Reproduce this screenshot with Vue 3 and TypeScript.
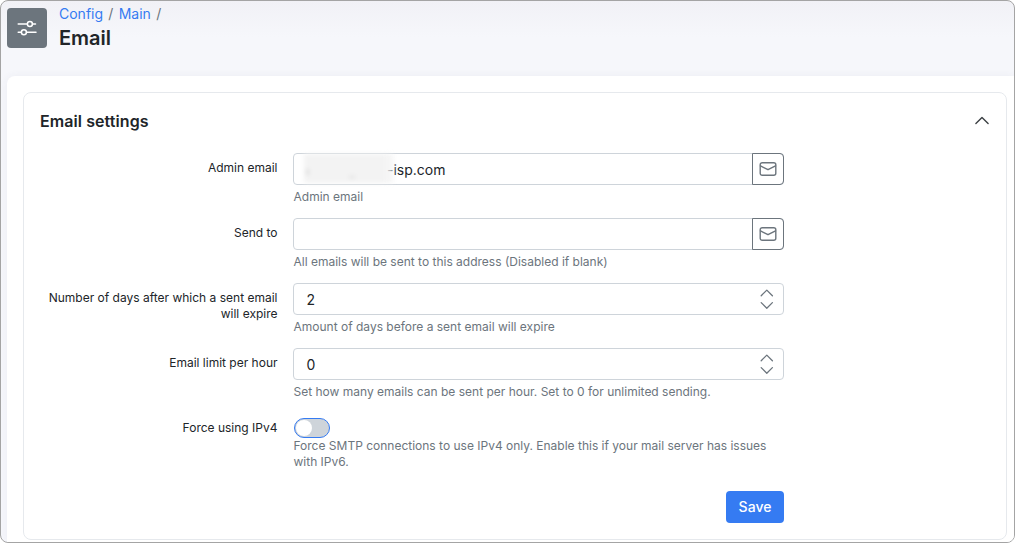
<script setup lang="ts">
interface Field {
  label: string
  hint: string
  kind: 'email' | 'number' | 'toggle'
  value: string
  masked?: boolean
}

const fields: Field[] = [
  { label: 'Admin email', hint: 'Admin email', kind: 'email', value: '-isp.com', masked: true },
  { label: 'Send to', hint: 'All emails will be sent to this address (Disabled if blank)', kind: 'email', value: '' },
  { label: 'Number of days after which a sent email will expire', hint: 'Amount of days before a sent email will expire', kind: 'number', value: '2' },
  { label: 'Email limit per hour', hint: 'Set how many emails can be sent per hour. Set to 0 for unlimited sending.', kind: 'number', value: '0' },
  { label: 'Force using IPv4', hint: 'Force SMTP connections to use IPv4 only. Enable this if your mail server has issues with IPv6.', kind: 'toggle', value: '' },
]
</script>

<template>
  <div class="window">
    <header class="header">
      <div class="header-icon">
        <svg width="20" height="16" viewBox="0 0 20 16" fill="none" stroke="#fff" stroke-width="1.5" stroke-linecap="round">
          <path d="M1.200 4h9M15.500 4h3M1.200 12.300h3M9.500 12.300h9.500" />
          <circle cx="12.900" cy="4" r="2.500" />
          <circle cx="6.900" cy="12.300" r="2.500" />
        </svg>
      </div>
      <div class="titles">
        <nav class="crumbs"><a>Config</a><span>/</span><a>Main</a><span>/</span></nav>
        <h1>Email</h1>
      </div>
    </header>
    <main class="panel">
      <section class="card">
        <div class="card-head">
          <h2>Email settings</h2>
          <svg width="16" height="10" viewBox="0 0 16 10" fill="none" stroke="#3c4044" stroke-width="1.4" stroke-linecap="round" stroke-linejoin="round">
            <path d="M1.900 7.500 8 1.400l6.100 6.100" />
          </svg>
        </div>
        <div class="fields">
          <div v-for="f in fields" :key="f.label" class="row" :class="f.kind">
            <div class="label">{{ f.label }}</div>
            <div class="control">
              <button v-if="f.kind === 'toggle'" class="switch" aria-label="Force using IPv4"><i></i></button>
              <div v-else class="input" :class="{ masked: f.masked }">
                <span class="value">{{ f.value }}</span>
                <span v-if="f.masked" class="mask"><i class="trace"></i><i class="tail"></i></span>
                <span v-if="f.kind === 'email'" class="addon">
                  <svg width="18" height="16" viewBox="0 0 18 16" fill="none" stroke="#6c757d" stroke-width="1.4" stroke-linejoin="round" stroke-linecap="round">
                    <rect x="1.200" y="1.700" width="15.600" height="12.600" rx="2" />
                    <path d="M1.500 4.900 9 8.700l7.500-3.800" />
                  </svg>
                </span>
                <svg v-else class="stepper" width="14" height="22" viewBox="0 0 14 22" fill="none" stroke="#6c757d" stroke-width="1.300" stroke-linecap="round" stroke-linejoin="round">
                  <path d="M1.200 7.700 6.800 2.100l5.600 5.600M1.200 14.600 6.800 20.200l5.600-5.600" />
                </svg>
              </div>
              <div class="hint">{{ f.hint }}</div>
            </div>
          </div>
        </div>
        <div class="actions"><button class="save">Save</button></div>
      </section>
    </main>
  </div>
</template>

<style>
body { background: #fff; }
</style>

<style scoped>
* { box-sizing: border-box; }
.window {
  width: 1015px;
  height: 543px;
  border: 1px solid #a4a4a4;
  border-radius: 8px;
  overflow: hidden;
  display: flex;
  flex-direction: column;
  background: linear-gradient(#f1f1f6 0, #f6f7fb 36px, #f6f7fc 100%);
  font-family: Inter, "Liberation Sans", sans-serif;
  color: #212529;
}
.header { height: 75px; flex: none; display: flex; padding: 7px 0 0 6px; }
.header-icon {
  width: 40px; height: 40px; border-radius: 4px; background: #6c757d;
  display: flex; align-items: center; justify-content: center;
}
.titles { margin-left: 12px; margin-top: -3px; }
.crumbs { font-size: 14px; line-height: 18px; color: #6c757d; white-space: nowrap; }
.crumbs a { color: #357bf2; }
.crumbs span { margin: 0 5.3px; }
h1 { margin: 2px 0 0; font-size: 20px; line-height: 26px; font-weight: 600; }
.panel {
  flex: 1; margin-left: 6px; padding: 16px 7px 2px 16px;
  background: #fff; border-top-left-radius: 8px;
  box-shadow: 0 0 8px rgba(60, 60, 110, .06);
}
.card { height: 448px; border: 1px solid #e6e9ed; border-radius: 8px; padding: 0 16px; }
.card-head { height: 60px; display: flex; align-items: center; justify-content: space-between; padding-bottom: 4px; }
h2 { margin: 0; font-size: 16px; line-height: 22px; font-weight: 600; letter-spacing: .08px; }
.fields { display: flex; flex-direction: column; }
.row { display: flex; height: 65px; }
.label { width: 237.500px; flex: none; padding-top: 7px; text-align: right; font-size: 12px; line-height: 16px; }
.control { width: 491px; margin-left: 15.500px; }
.input {
  position: relative; height: 32px; border: 1px solid #ced4da; border-radius: 4px;
  display: flex; align-items: center; padding-left: 12.500px; font-size: 14px; line-height: 18px;
}
.value { padding-top: 2px; }
.masked .value { padding-left: 80.500px; }
.mask {
  position: absolute; left: 10px; top: 0; width: 90px; height: 29px;
  background: linear-gradient(90deg, #f3f3f3 88%, rgba(243, 243, 243, .55)); filter: blur(2px);
}
.trace, .tail { position: absolute; background: #dedede; height: 6px; width: 3px; left: 2px; top: 15px; }
.tail { left: 45px; top: 22px; width: 6px; height: 2px; }
.addon {
  width: 32px; height: 32px; margin: -1px -1px -1px auto; border: 1px solid #6c757d;
  border-radius: 0 4px 4px 0; display: flex; align-items: center; justify-content: center;
}
.stepper { margin-left: auto; margin-right: 9px; }
.hint { margin-top: 4px; font-size: 12px; line-height: 16px; color: #6c757d; padding-left: .5px; }
.toggle .control { padding-top: 5px; }
.switch {
  display: block; width: 36px; height: 20px; margin-left: 1px; padding: 1px; border: 1px solid #357bf2;
  border-radius: 10px; background: #ced4da;
}
.switch i { display: block; width: 16px; height: 16px; border-radius: 50%; background: #fff; }
.toggle .hint { margin-top: 0; }
.actions { display: flex; justify-content: flex-end; padding: 13px 206px 0 0; }
.save {
  width: 58px; height: 32px; padding: 0; border: 0; border-radius: 4px; background: #357bf2; color: #fff;
  font-family: inherit; font-size: 14px; line-height: 18px; font-weight: 500;
}
</style>
